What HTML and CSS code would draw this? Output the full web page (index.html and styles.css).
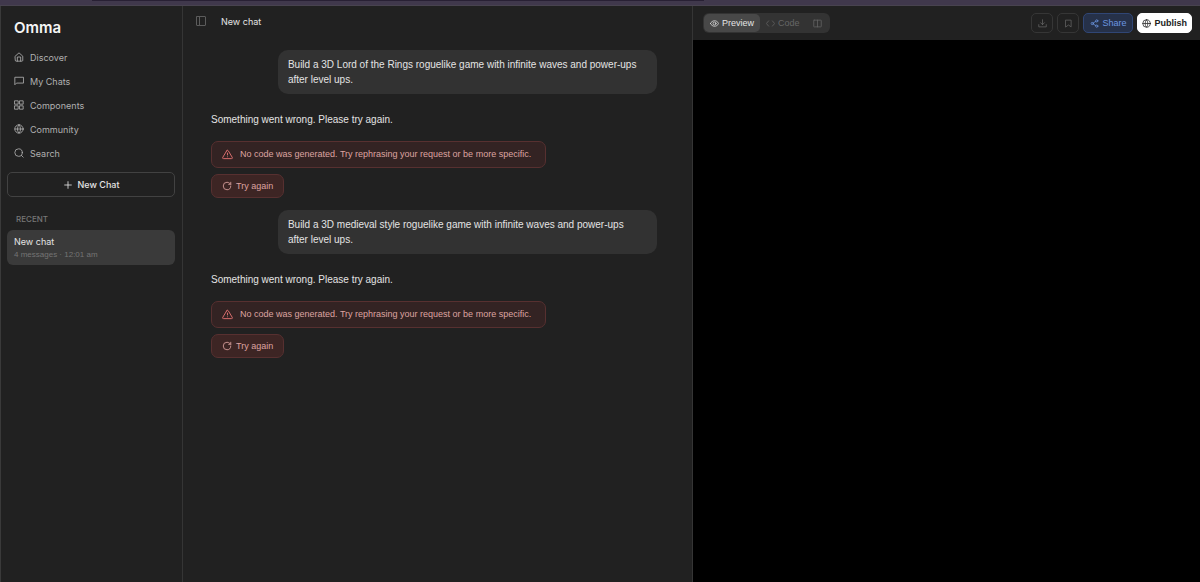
FILE: index.html
```html
<!DOCTYPE html>
<html lang="en">
<head>
    <meta charset="utf-8">
    <title>Omma</title>
    <link rel="stylesheet" href="styles.css">
</head>
<body>
    <!-- shared icons -->
    <svg class="sprite" aria-hidden="true">
        <symbol id="globe" viewBox="0 0 24 24"><circle cx="12" cy="12" r="10"/><path d="M2 12h20M12 2a15 15 0 0 1 0 20a15 15 0 0 1 0-20z"/></symbol>
        <symbol id="warning" viewBox="0 0 24 24"><path d="M10.300 3.900L1.800 18a2 2 0 0 0 1.700 3h17a2 2 0 0 0 1.700-3L13.700 3.900a2 2 0 0 0-3.400 0zM12 9v4M12 17h.01"/></symbol>
        <symbol id="retry" viewBox="0 0 24 24"><path d="M21 12a9 9 0 1 1-9-9c2.500 0 4.900 1 6.700 2.700L21 8M21 3v5h-5"/></symbol>
    </svg>

    <div class="tab-strip"><div class="tab-line"></div></div>

    <div class="app">
        <aside class="sidebar">
            <h1 class="logo">Omma</h1>
            <nav class="nav">
                <a href="#"><svg class="icon" viewBox="0 0 24 24"><path d="M3 10l9-8 9 8v10a2 2 0 0 1-2 2H5a2 2 0 0 1-2-2zM8 22V12h8v10"/></svg>Discover</a>
                <a href="#"><svg class="icon" viewBox="0 0 24 24"><path d="M22 3H2v18l4-4h16z"/></svg>My Chats</a>
                <a href="#"><svg class="icon" viewBox="0 0 24 24"><rect x="2" y="2" width="8" height="8"/><rect x="14" y="2" width="8" height="8"/><rect x="2" y="14" width="8" height="8"/><rect x="14" y="14" width="8" height="8"/></svg>Components</a>
                <a href="#"><svg class="icon"><use href="#globe"/></svg>Community</a>
                <a href="#"><svg class="icon" viewBox="0 0 24 24"><circle cx="11" cy="11" r="9"/><path d="M22 22l-4.500-4.500"/></svg>Search</a>
            </nav>
            <button class="new-chat"><svg class="icon" viewBox="0 0 24 24"><path d="M12 4v16M4 12h16"/></svg>New Chat</button>
            <h2 class="section-title">RECENT</h2>
            <a href="#" class="recent">
                <span class="recent-name">New chat</span>
                <span class="recent-meta">4 messages · 12:01 am</span>
            </a>
        </aside>

        <main class="chat">
            <header class="chat-header">
                <button class="toggle" aria-label="Toggle sidebar"><svg class="icon" viewBox="0 0 24 24"><rect x="3" y="3" width="18" height="18" rx="1"/><path d="M9 3v18"/></svg></button>
                <span>New chat</span>
            </header>
            <div class="messages">
                <p class="bubble">Build a 3D Lord of the Rings roguelike game with infinite waves and power-ups after level ups.</p>
                <p class="reply">Something went wrong. Please try again.</p>
                <div class="alert"><svg class="icon"><use href="#warning"/></svg>No code was generated. Try rephrasing your request or be more specific.</div>
                <button class="retry"><svg class="icon"><use href="#retry"/></svg>Try again</button>

                <p class="bubble">Build a 3D medieval style roguelike game with infinite waves and power-ups after level ups.</p>
                <p class="reply">Something went wrong. Please try again.</p>
                <div class="alert"><svg class="icon"><use href="#warning"/></svg>No code was generated. Try rephrasing your request or be more specific.</div>
                <button class="retry"><svg class="icon"><use href="#retry"/></svg>Try again</button>
            </div>
        </main>

        <section class="preview">
            <header class="toolbar">
                <div class="view-switch">
                    <button class="view active"><svg class="icon" viewBox="0 0 24 24"><path d="M1 12c5-10 17-10 22 0c-5 10-17 10-22 0z"/><circle cx="12" cy="12" r="4"/></svg>Preview</button>
                    <button class="view"><svg class="icon" viewBox="0 0 24 24"><path d="M7 5l-6 7 6 7M17 5l6 7-6 7"/></svg>Code</button>
                    <button class="view split" aria-label="Split view"><svg class="icon" viewBox="0 0 24 24"><rect x="2" y="3" width="20" height="18" rx="1"/><path d="M12 3v18"/></svg></button>
                </div>
                <div class="actions">
                    <button class="action square" aria-label="Download"><svg class="icon" viewBox="0 0 24 24"><path d="M12 2v13M7 10l5 5 5-5M2 15v6h20v-6"/></svg></button>
                    <button class="action square" aria-label="Bookmark"><svg class="icon" viewBox="0 0 24 24"><path d="M5 3h14v18l-7-5-7 5z"/></svg></button>
                    <button class="action share"><svg class="icon" viewBox="0 0 24 24"><circle cx="18" cy="5" r="3"/><circle cx="6" cy="12" r="3"/><circle cx="18" cy="19" r="3"/><path d="M8.600 13.500l6.800 4M15.400 6.500l-6.800 4"/></svg>Share</button>
                    <button class="action publish"><svg class="icon"><use href="#globe"/></svg>Publish</button>
                </div>
            </header>
            <div class="canvas"></div>
        </section>
    </div>
</body>
</html>
```
FILE: styles.css
```css
* {
    box-sizing: border-box;
}
body {
    margin: 0;
    min-height: 100vh;
    display: flex;
    flex-direction: column;
    background: #212121;
    color: #e4e4e4;
    font: 9px/15px Inter, "Liberation Sans", sans-serif;
}
h1, h2, p {
    margin: 0;
}
a {
    color: inherit;
    text-decoration: none;
}
button {
    display: flex;
    align-items: center;
    justify-content: center;
    margin: 0;
    padding: 0;
    border: 0;
    background: none;
    color: inherit;
    font: inherit;
    cursor: pointer;
}
.sprite {
    display: none;
}
.icon {
    flex: none;
    width: 10px;
    height: 10px;
    fill: none;
    stroke: currentColor;
    stroke-width: 2;
    stroke-linecap: round;
    stroke-linejoin: round;
}
.tab-strip {
    height: 6px;
    background: #40384c;
    border-bottom: 1px solid #48434f;
}
.tab-line {
    width: 51%;
    height: 1px;
    margin-left: 92px;
    background: #282034;
}
.app {
    flex: 1;
    display: grid;
    grid-template-columns: 182px 510fr 507fr;
    border-left: 1px solid #3a3a3a;
}

/* sidebar */
.sidebar {
    padding: 12px 7px 0 6px;
    border-right: 1px solid #353535;
}
.logo {
    padding-left: 7px;
    font-size: 15px;
    line-height: 20px;
    font-weight: 600;
    color: #f5f5f5;
}
.nav {
    margin-top: 7px;
    color: #b0b0b0;
}
.nav a {
    display: flex;
    align-items: center;
    gap: 6px;
    height: 24px;
    padding-left: 7px;
}
.new-chat {
    width: 100%;
    height: 25px;
    margin-top: 7px;
    gap: 5px;
    border: 1px solid #424242;
    border-radius: 5px;
    font-weight: 500;
}
.section-title {
    margin: 15px 0 3px;
    padding-left: 9px;
    font-size: 8px;
    font-weight: 500;
    color: #777;
}
.recent {
    display: block;
    height: 35px;
    padding: 5px 7px;
    border-radius: 6px;
    background: #3a3a3a;
}
.recent span {
    display: block;
    line-height: 13px;
}
.recent .recent-meta {
    font-family: "Liberation Sans", Arial, sans-serif;
    font-size: 8px;
    color: #747474;
}

/* chat */
.chat {
    border-right: 1px solid #353535;
}
.chat-header {
    display: flex;
    align-items: center;
    gap: 14px;
    height: 30px;
    padding-left: 12px;
}
.toggle {
    color: #5c5c5c;
}
.toggle .icon {
    width: 12px;
    height: 12px;
}
.messages {
    display: flex;
    flex-direction: column;
    align-items: flex-start;
    padding: 14px 35px 14px 28px;
    font-family: "Liberation Sans", Arial, sans-serif;
}
.bubble, .reply {
    font-size: 10px;
}
.bubble {
    align-self: flex-end;
    width: 85%;
    padding: 7px 14px 7px 10px;
    border-radius: 10px;
    background: #323232;
}
.reply {
    margin: 18px 0 14px;
}
.alert, .retry {
    display: flex;
    align-items: center;
    border: 1px solid #573030;
    border-radius: 7px;
    color: #dda3a0;
}
.alert {
    min-height: 27px;
    padding: 0 14px 0 10px;
    gap: 7px;
    background: #332323;
}
.alert .icon {
    width: 11px;
    height: 11px;
    color: #e57373;
}
.retry {
    height: 24px;
    margin: 6px 0 12px;
    padding: 0 10px;
    gap: 4px;
    background: #3d2524;
}

/* preview */
.preview {
    display: flex;
    flex-direction: column;
}
.toolbar {
    display: flex;
    align-items: center;
    justify-content: space-between;
    height: 34px;
    padding: 0 8px 0 10px;
    font-family: "Liberation Sans", Arial, sans-serif;
}
.view-switch {
    display: flex;
    padding: 1px;
    border-radius: 6px;
    background: #333;
}
.view {
    height: 18px;
    padding: 0 6px;
    gap: 3px;
    border-radius: 5px;
    color: #666;
}
.view .icon, .action .icon {
    width: 9px;
    height: 9px;
}
.view.active {
    background: #484848;
    color: #e4e4e4;
}
.view.split {
    padding: 0 7px;
}
.actions {
    display: flex;
    gap: 4px;
}
.action {
    height: 20px;
    padding: 0 6px;
    gap: 3px;
    border: 1px solid #363636;
    border-radius: 5px;
}
.action.square {
    width: 22px;
    padding: 0;
    color: #666;
}
.share {
    border-color: #304675;
    background: #263149;
    color: #6b95e0;
}
.action.publish {
    padding: 0 4px;
    border-color: #fff;
    background: #fff;
    color: #222;
    font-weight: 600;
}
.canvas {
    flex: 1;
    background: #000;
}
```
